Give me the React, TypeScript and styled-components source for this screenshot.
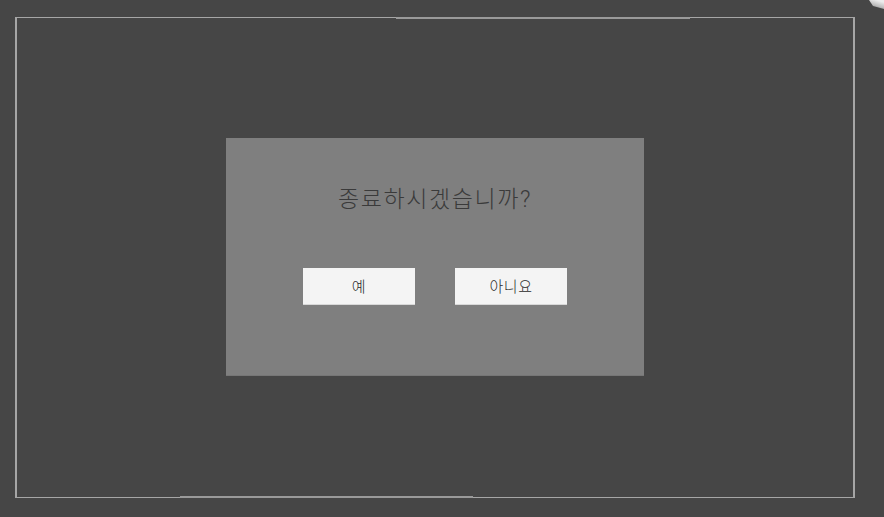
import styled, { createGlobalStyle } from 'styled-components'

const GlobalStyle = createGlobalStyle`
  html, body {
    margin: 0;
    padding: 0;
    background: #464646;
    font-family: Roboto, "Noto Sans CJK KR", sans-serif;
  }
`

const Screen = styled.div`
  position: relative;
  width: 884px;
  height: 517px;
  box-sizing: border-box;
  padding: 17px 29px 19px 15px;
  background: #464646;
`

const Frame = styled.div`
  position: relative;
  box-sizing: border-box;
  height: 100%;
  padding-bottom: 2px;
  border: 1px solid #a6a6a6;
  border-left-width: 2px;
  border-right-width: 2px;
  display: flex;
  align-items: center;
  justify-content: center;

  /* brighter worn segments on the frame edges */
  &::before,
  &::after {
    content: '';
    position: absolute;
    height: 2px;
    background: #9a9a9a;
  }
  &::before {
    top: -1px;
    left: 379px;
    width: 294px;
  }
  &::after {
    bottom: -1px;
    left: 163px;
    width: 293px;
  }
`

const Dialog = styled.div`
  width: 418px;
  height: 238px;
  box-sizing: border-box;
  background: #7f7f7f;
  border-bottom: 1px solid #767676;
  display: flex;
  flex-direction: column;
  align-items: center;
  padding-top: 43px;
`

const Title = styled.h1`
  margin: 0;
  font-size: 23px;
  line-height: 38px;
  letter-spacing: 1.6px;
  font-weight: 300;
  color: #3a3a3a;
`

const ButtonRow = styled.div`
  display: flex;
  gap: 40px;
  margin-top: 49px;
`

const Button = styled.button`
  width: 112px;
  height: 37px;
  border: none;
  border-bottom: 1px solid #d8d8d8;
  background: #f4f4f4;
  color: #2a2a2a;
  font-family: Roboto, "Noto Sans CJK KR", sans-serif;
  font-size: 15px;
  font-weight: 300;
  letter-spacing: 0.5px;
  padding: 0;
  cursor: pointer;
`

const Curl = styled.svg`
  position: absolute;
  top: 0;
  right: 0;
`

export default function App() {
  return (
    <>
      <GlobalStyle />
      <Screen>
        <Frame>
          <Dialog>
            <Title>종료하시겠습니까?</Title>
            <ButtonRow>
              <Button>예</Button>
              <Button>아니요</Button>
            </ButtonRow>
          </Dialog>
        </Frame>
        <Curl width="15" height="10" viewBox="0 0 15 10">
          <defs>
            <linearGradient id="curl" x1="0" y1="1" x2="0.5" y2="0">
              <stop offset="0" stopColor="#6e6e6e" />
              <stop offset="0.5" stopColor="#bdbdbd" />
              <stop offset="1" stopColor="#ececec" />
            </linearGradient>
          </defs>
          <path d="M0 0 H15 V9 L4 6 Z" fill="url(#curl)" />
        </Curl>
      </Screen>
    </>
  )
}
